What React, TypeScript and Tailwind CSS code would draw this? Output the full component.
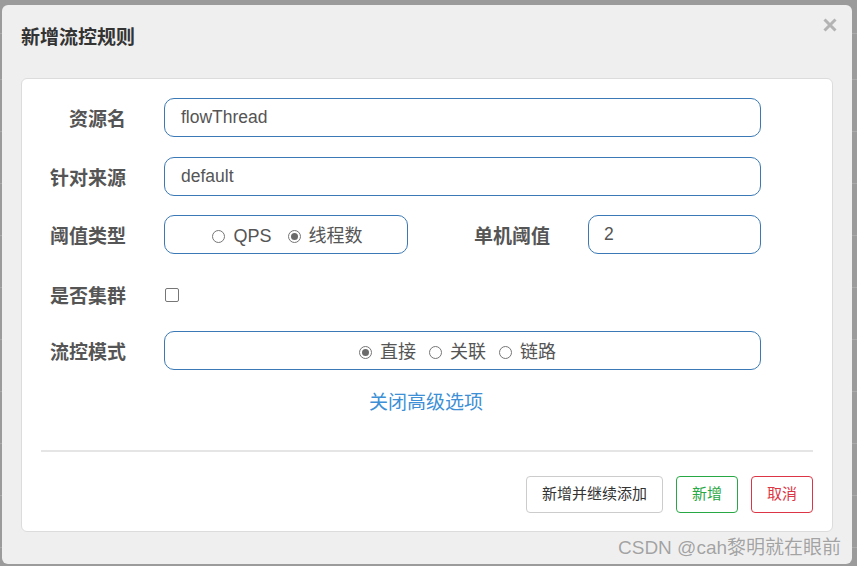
import React from "react";

const font = { fontFamily: '"Liberation Sans", "Noto Sans CJK SC", sans-serif' };

function Radio({ checked, label }: { checked?: boolean; label: string }) {
  return (
    <span className="flex items-center">
      <span className="flex h-[13px] w-[13px] items-center justify-center rounded-full border border-[#767676] bg-white">
        {checked && <span className="h-[7px] w-[7px] rounded-full bg-[#6b6b6b]" />}
      </span>
      <span className="ml-[8px] text-[18px] text-[#555]">{label}</span>
    </span>
  );
}

const labelCls = "mt-[5px] w-[104px] text-right text-[19px] font-bold text-[#555]";

export default function App() {
  const lineYs = [33, 79, 131, 183, 235, 287, 339, 391, 443, 495, 547];
  return (
    <div className="relative h-[566px] w-[857px] overflow-hidden bg-[#9b9b9b]" style={font}>
      {/* background table rows behind the modal */}
      <div className="absolute inset-0">
        {lineYs.map((y) => (
          <div key={y} className="absolute left-0 right-0 h-px bg-[#aaaaaa]" style={{ top: y }} />
        ))}
      </div>

      {/* modal */}
      <div className="absolute left-[2px] top-[5px] flex h-[559px] w-[850px] flex-col rounded-[6px] bg-[#efefef]">
        <div className="relative flex h-[73px] items-start px-[19px] pt-[20px]">
          <h4 className="text-[19px] font-bold leading-[26px] text-[#333]">新增流控规则</h4>
          <button className="absolute right-[15px] top-[13px] flex h-[14px] w-[14px] items-center justify-center">
            <svg width="14" height="14" viewBox="0 0 14 14">
              <path d="M1.5 1.5 L12.5 12.5 M12.5 1.5 L1.5 12.5" stroke="#b3b3b3" strokeWidth="3" strokeLinecap="butt" />
            </svg>
          </button>
        </div>

        <div className="ml-[19px] flex h-[454px] w-[812px] flex-col rounded-[6px] border border-[#dcdcdc] bg-white">
          <div className="flex flex-col pt-[19px]">
            {/* row 1 */}
            <div className="flex h-[39px] items-center">
              <label className={labelCls}>资源名</label>
              <div className="ml-[38px] flex h-[39px] w-[597px] items-center rounded-[10px] border border-[#3a79b5] px-[16px] text-[17.5px] text-[#555]">
                flowThread
              </div>
            </div>
            {/* row 2 */}
            <div className="mt-[20px] flex h-[39px] items-center">
              <label className={labelCls}>针对来源</label>
              <div className="ml-[38px] flex h-[39px] w-[597px] items-center rounded-[10px] border border-[#3a79b5] px-[16px] text-[17.5px] text-[#555]">
                default
              </div>
            </div>
            {/* row 3 */}
            <div className="mt-[19px] flex h-[39px] items-center">
              <label className={labelCls}>阈值类型</label>
              <div className="ml-[38px] flex h-[39px] w-[244px] items-center justify-center gap-[16px] rounded-[10px] border border-[#3a79b5] pl-[3px] pt-[4px]">
                <Radio label="QPS" />
                <Radio checked label="线程数" />
              </div>
              <label className="mt-[5px] w-[142px] text-right text-[19px] font-bold text-[#555]">单机阈值</label>
              <div className="ml-[38px] flex h-[39px] w-[173px] items-center rounded-[10px] border border-[#3a79b5] px-[15px] text-[17.5px] text-[#555]">
                2
              </div>
            </div>
            {/* row 4 */}
            <div className="mt-[21px] flex h-[39px] items-center">
              <label className={labelCls}>是否集群</label>
              <span className="ml-[39px] mt-[1px] h-[14px] w-[14px] rounded-[2px] border border-[#767676] bg-white" />
            </div>
            {/* row 5 */}
            <div className="mt-[17px] flex h-[39px] items-center">
              <label className={labelCls}>流控模式</label>
              <div className="ml-[38px] flex h-[39px] w-[597px] items-center justify-center gap-[13px] rounded-[10px] border border-[#3a79b5] pr-[10px] pt-[4px]">
                <Radio checked label="直接" />
                <Radio label="关联" />
                <Radio label="链路" />
              </div>
            </div>
            {/* link */}
            <div className="mt-[20px] flex h-[26px] items-center pl-[347px]">
              <a className="text-[19px] text-[#3d8fd6]">关闭高级选项</a>
            </div>
          </div>

          <div className="mx-[19px] mt-[34px] h-[2px] bg-[#e5e5e5]" />

          <div className="mt-auto flex justify-end gap-[13px] pb-[18px] pr-[19px]">
            <button className="h-[37px] w-[137px] rounded-[4px] border border-[#cccccc] bg-white text-[15px] text-[#333]">
              新增并继续添加
            </button>
            <button className="h-[37px] w-[62px] rounded-[4px] border border-[#28a745] bg-white text-[15px] text-[#28a745]">
              新增
            </button>
            <button className="h-[37px] w-[62px] rounded-[4px] border border-[#dc3545] bg-white text-[15px] text-[#dc3545]">
              取消
            </button>
          </div>
        </div>
      </div>

      {/* watermark */}
      <div
        className="absolute left-[618px] top-[534px] text-[19px] leading-[28px] text-[#a3a3a3]"
        style={{ textShadow: "0 0 1px #ffffff" }}
      >
        CSDN @cah黎明就在眼前
      </div>
    </div>
  );
}
